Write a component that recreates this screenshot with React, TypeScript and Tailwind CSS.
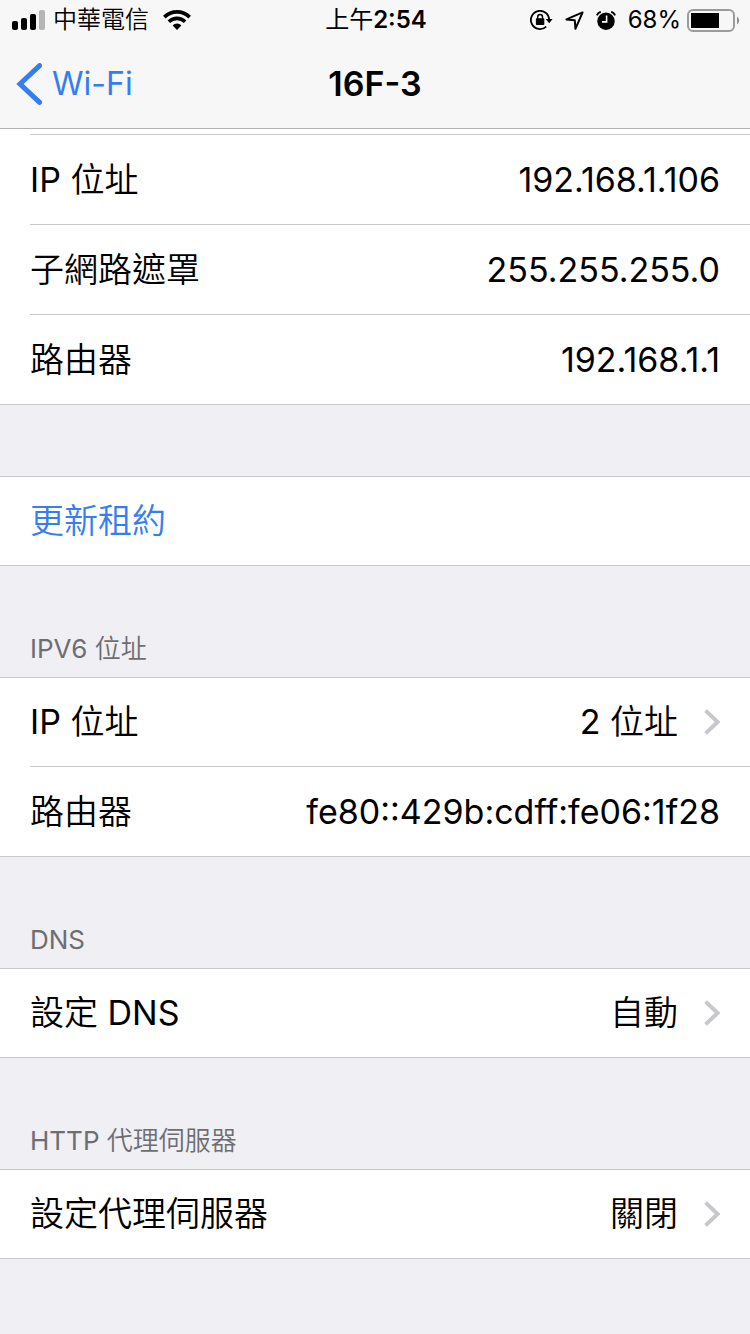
import type { ReactNode } from "react";

const lease = [
  { label: "IP 位址", value: "192.168.1.106" },
  { label: "子網路遮罩", value: "255.255.255.0" },
  { label: "路由器", value: "192.168.1.1" },
];

// Chinese glyphs use the DemiLight weight, Latin runs stay regular
function Mixed({ text }: { text: string }) {
  return (
    <span className="whitespace-pre">
      {text.split(/([\x20-\x7e]+)/).map((run, i) => (
        <span key={i} className={i % 2 ? "font-normal" : "font-[350]"}>
          {run}
        </span>
      ))}
    </span>
  );
}

function SignalIcon() {
  return (
    <svg width="33" height="20" viewBox="0 0 33 20" aria-hidden="true">
      <rect x="0" y="11" width="6" height="9" rx="2" />
      <rect x="9" y="8" width="6" height="12" rx="2" />
      <rect x="18" y="4" width="6" height="16" rx="2" />
      <rect x="27" y="0" width="6" height="20" rx="2" fill="#b5b5b6" />
    </svg>
  );
}

function WifiIcon() {
  return (
    <svg width="28" height="20" viewBox="0 0 28 20" aria-hidden="true">
      <g fill="none" stroke="#000" strokeWidth="3.6">
        <path d="M1.3 7.1a18 18 0 0 1 25.4 0" />
        <path d="M5.9 11.7a11.5 11.5 0 0 1 16.2 0" />
      </g>
      <path d="M14 20l-4.4-4.6a6.2 6.2 0 0 1 8.8 0z" />
    </svg>
  );
}

function RotationLockIcon() {
  return (
    <svg width="23" height="20" viewBox="0 0 23 20" aria-hidden="true">
      <path
        d="M16.2 16.6A9.1 9.1 0 1 1 19.1 10"
        fill="none"
        stroke="#000"
        strokeWidth="1.8"
      />
      <path d="M15.6 9H22.6l-3.4 4.2z" />
      <rect x="5.9" y="8.3" width="8.4" height="6.8" rx="0.8" />
      <path
        d="M7.7 9V6.9a2.4 2.4 0 0 1 4.8 0V9"
        fill="none"
        stroke="#000"
        strokeWidth="1.5"
      />
    </svg>
  );
}

function LocationIcon() {
  return (
    <svg width="19" height="19" viewBox="0 0 19 19" aria-hidden="true">
      <path
        d="M17.6 1.4L1.4 8.4l8.4.8.6 8.6z"
        fill="none"
        stroke="#000"
        strokeWidth="2"
        strokeLinejoin="round"
      />
    </svg>
  );
}

function AlarmIcon() {
  return (
    <svg width="20" height="19" viewBox="0 0 20 19" aria-hidden="true">
      <circle cx="10" cy="10.2" r="8.7" />
      <path
        d="M.9 4.4Q2 1.6 4.8.8M19.1 4.4Q18 1.6 15.2.8"
        fill="none"
        stroke="#000"
        strokeWidth="1.9"
      />
      <path d="M10.6 4.6v6.3H6" fill="none" stroke="#fff" strokeWidth="1.6" />
    </svg>
  );
}

function BatteryIcon() {
  return (
    <svg width="53" height="23" viewBox="0 0 53 23" aria-hidden="true">
      <rect
        x="1"
        y="1"
        width="46"
        height="21"
        rx="5"
        fill="none"
        stroke="#9b9b9c"
        strokeWidth="2"
      />
      <rect x="4" y="4" width="28" height="15" />
      <path d="M50 7.6a4.6 4.6 0 0 1 0 7.8z" fill="#8e8e8f" />
    </svg>
  );
}

function Disclosure() {
  return (
    <svg
      className="ml-[26px] shrink-0"
      width="16"
      height="26"
      viewBox="0 0 16 26"
      aria-hidden="true"
    >
      <path
        d="M1.6 1.6L13.6 13L1.6 24.4"
        fill="none"
        stroke="#c7c7cc"
        strokeWidth="4"
      />
    </svg>
  );
}

function StatusBar() {
  return (
    <div className="grid h-10 grid-cols-[1fr_auto_1fr] items-center pl-3 pr-2.5 text-2xl leading-10">
      <div className="flex items-center">
        <SignalIcon />
        <span className="ml-2 mr-3.5 font-[350]">中華電信</span>
        <WifiIcon />
      </div>
      <div>
        <span>上午</span>
        <span className="font-semibold">2:54</span>
      </div>
      <div className="flex items-center justify-end">
        <RotationLockIcon />
        <span className="mx-3">
          <LocationIcon />
        </span>
        <AlarmIcon />
        <span className="ml-3 mr-1.5">68%</span>
        <BatteryIcon />
      </div>
    </div>
  );
}

function NavBar() {
  return (
    <div className="grid h-22 grid-cols-[1fr_auto_1fr] items-center px-4">
      <a href="#wifi" className="flex items-center gap-2.5 text-[#347df3]">
        <svg width="26" height="42" viewBox="0 0 26 42" aria-hidden="true">
          <path
            d="M23.6 2.6L4 21L23.6 39.4"
            fill="none"
            stroke="currentColor"
            strokeWidth="5"
            strokeLinecap="round"
            strokeLinejoin="miter"
          />
        </svg>
        <span className="text-[32px]">Wi-Fi</span>
      </a>
      <h1 className="font-semibold">16F-3</h1>
    </div>
  );
}

function Section({ title, children }: { title?: string; children: ReactNode }) {
  return (
    <section>
      {title ? (
        <h2 className="flex h-[111px] items-end px-[30px] pb-2 text-[26px] leading-10 text-[#6d6d72]">
          <Mixed text={title} />
        </h2>
      ) : (
        <div className="h-[71px]" />
      )}
      <div className="border-y border-[#c8c7cc] bg-white">{children}</div>
    </section>
  );
}

function ValueRow({ label, value }: { label: string; value: string }) {
  return (
    <div className="ml-[30px] flex h-[90px] items-center justify-between border-t border-[#c8c7cc] pr-[30px]">
      <Mixed text={label} />
      <Mixed text={value} />
    </div>
  );
}

function LinkRow({
  label,
  value,
  href,
}: {
  label: string;
  value: string;
  href: string;
}) {
  return (
    <a href={href} className="flex h-[88px] items-center px-[30px]">
      <span className="flex-1">
        <Mixed text={label} />
      </span>
      <Mixed text={value} />
      <Disclosure />
    </a>
  );
}

export default function App() {
  return (
    <div
      lang="zh-Hant"
      className="min-h-screen bg-[#efeff4] font-['Inter','Noto_Sans_CJK_TC',sans-serif] text-[34px] leading-[50px] text-black"
    >
      <header className="border-b border-[#b2b2b4] bg-[#f7f7f8]">
        <StatusBar />
        <NavBar />
      </header>

      <main>
        <div className="border-b border-[#c8c7cc] bg-white pt-[5px]">
          {lease.map((row) => (
            <ValueRow key={row.label} label={row.label} value={row.value} />
          ))}
        </div>

        <Section>
          <button
            type="button"
            className="block h-[88px] w-full px-[30px] text-left text-[#347df3]"
          >
            <Mixed text="更新租約" />
          </button>
        </Section>

        <Section title="IPV6 位址">
          <LinkRow label="IP 位址" value="2 位址" href="#ipv6" />
          <ValueRow label="路由器" value="fe80::429b:cdff:fe06:1f28" />
        </Section>

        <Section title="DNS">
          <LinkRow label="設定 DNS" value="自動" href="#dns" />
        </Section>

        <Section title="HTTP 代理伺服器">
          <LinkRow label="設定代理伺服器" value="關閉" href="#proxy" />
        </Section>
      </main>
    </div>
  );
}
